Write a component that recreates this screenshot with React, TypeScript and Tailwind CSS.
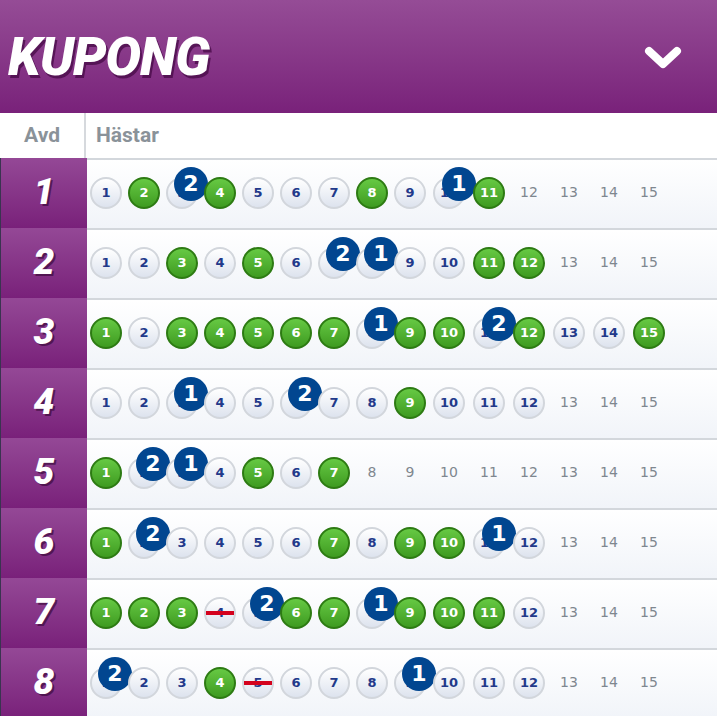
import React from "react";

type Row = {
  green: number[];
  max: number;
  badges: Record<number, number>;
  scratched?: number[];
};

const rows: Row[] = [
  { green: [2, 4, 8, 11], max: 11, badges: { 3: 2, 10: 1 } },
  { green: [3, 5, 11, 12], max: 12, badges: { 7: 2, 8: 1 } },
  { green: [1, 3, 4, 5, 6, 7, 9, 10, 12, 15], max: 15, badges: { 8: 1, 11: 2 } },
  { green: [9], max: 12, badges: { 3: 1, 6: 2 } },
  { green: [1, 5, 7], max: 7, badges: { 2: 2, 3: 1 } },
  { green: [1, 7, 9, 10], max: 12, badges: { 2: 2, 11: 1 } },
  { green: [1, 2, 3, 6, 7, 9, 10, 11], max: 12, badges: { 5: 2, 8: 1 }, scratched: [4] },
  { green: [4], max: 12, badges: { 1: 2, 9: 1 }, scratched: [5] },
];

const nums = Array.from({ length: 15 }, (_, i) => i + 1);

function Cell({ n, row }: { n: number; row: Row }) {
  const w = n < 10 ? "w-[38px]" : "w-[40px]";
  if (n > row.max) {
    return (
      <div className={`${w} flex justify-center shrink-0`}>
        <span className="text-[14px] text-[#7f878f] [font-family:'DejaVu_Sans',sans-serif]">{n}</span>
      </div>
    );
  }
  const isGreen = row.green.includes(n);
  const isScratched = row.scratched?.includes(n);
  const badge = row.badges[n];
  return (
    <div className={`${w} flex justify-center shrink-0`}>
      <div
        className={
          isGreen
            ? "relative w-[32px] h-[32px] rounded-full border-2 border-[#2d7b13] bg-gradient-to-b from-[#66c943] to-[#3e9b20] flex items-center justify-center text-white text-[13px] font-bold [font-family:'DejaVu_Sans',sans-serif]"
            : "relative w-[32px] h-[32px] rounded-full border-2 border-[#d2d6dc] bg-gradient-to-b from-[#ffffff] to-[#dde3ee] flex items-center justify-center text-[#22398a] text-[13px] font-bold [font-family:'DejaVu_Sans',sans-serif]"
        }
      >
        <span>{n}</span>
        {isScratched && (
          <div className="absolute left-[0px] top-[12px] w-[28px] h-[4px] bg-[#d4021d]" />
        )}
        {badge !== undefined && (
          <div
            className={`absolute ${n < 10 ? "left-[6px]" : "left-[7px]"} top-[-12px] w-[34px] h-[34px] rounded-full bg-[#014690] flex items-center justify-center text-white text-[22px] font-bold [font-family:'DejaVu_Sans',sans-serif]`}
          >
            {badge}
          </div>
        )}
      </div>
    </div>
  );
}

export default function App() {
  return (
    <div className="w-[717px] h-[716px] overflow-hidden bg-white">
      <div className="h-[113px] bg-gradient-to-b from-[#954c96] to-[#79217a] flex items-center justify-between pl-[8px] pr-[35px]">
        <span className="text-[53px] leading-none font-black italic text-white tracking-[-1px] [font-family:Roboto,sans-serif] [text-shadow:2px_3px_0_rgba(70,10,70,0.75)] mt-[2px]">
          KUPONG
        </span>
        <svg width="38" height="24" viewBox="0 0 38 24" className="mt-[2px]">
          <polyline
            points="5,5 19,18 33,5"
            fill="none"
            stroke="white"
            strokeWidth="8"
            strokeLinecap="round"
            strokeLinejoin="round"
          />
        </svg>
      </div>
      <div className="h-[45px] flex">
        <div className="w-[86px] border-r-2 border-[#d6d9dd] flex items-center justify-center text-[21px] font-bold text-[#8a9299] [font-family:Roboto,sans-serif]">
          Avd
        </div>
        <div className="flex-1 flex items-center pl-[10px] text-[21px] font-bold text-[#8a9299] [font-family:Roboto,sans-serif]">
          Hästar
        </div>
      </div>
      {rows.map((row, i) => (
        <div key={i} className="h-[70px] flex">
          <div className="w-[87px] shrink-0 border-l border-[#3a3450] bg-gradient-to-b from-[#944896] to-[#79207a] flex items-center justify-center pb-[4px]">
            <span className="text-[37px] leading-none font-black italic text-white [font-family:Roboto,sans-serif] [text-shadow:2px_2px_0_rgba(60,10,60,0.7)]">
              {i + 1}
            </span>
          </div>
          <div className="flex-1 border-t-2 border-[#d3d7dc] bg-gradient-to-b from-white to-[#f1f4f9] flex items-center pb-[3px]">
            {nums.map((n) => (
              <Cell key={n} n={n} row={row} />
            ))}
          </div>
        </div>
      ))}
    </div>
  );
}
